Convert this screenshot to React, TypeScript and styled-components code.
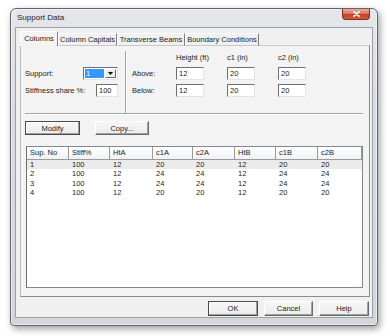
import React from "react";
import styled, { createGlobalStyle } from "styled-components";

const GlobalStyle = createGlobalStyle`
  html, body { margin: 0; padding: 0; background: #ffffff; }
  body {
    font-family: "Liberation Sans", Arial, sans-serif;
    font-size: 7.5px;
    color: #222222;
  }
  * { box-sizing: border-box; }
`;

const Screen = styled.div`
  width: 390px;
  height: 336px;
  padding: 8px 0 0 10px;
  overflow: hidden;
`;

const Window = styled.div`
  width: 368px;
  height: 318px;
  border: 1px solid #5f656b;
  border-radius: 6px 6px 4px 4px;
  background: linear-gradient(180deg, #e4e6e9 0%, #d8dbdf 35%, #d2d5d9 100%);
  box-shadow: 2px 3px 7px rgba(0, 0, 0, 0.38), inset 0 0 0 1px rgba(255, 255, 255, 0.55);
  padding: 0 4px 7px 4px;
  display: flex;
  flex-direction: column;
`;

const TitleBar = styled.div`
  height: 18px;
  display: flex;
  align-items: flex-start;
  justify-content: space-between;
`;

const Title = styled.span`
  font-size: 8px;
  line-height: 18px;
  padding-left: 2px;
  color: #1b1b1b;
`;

const CloseButton = styled.div`
  width: 28px;
  height: 11px;
  margin-right: 3px;
  border: 1px solid #7d2f22;
  border-top: none;
  border-radius: 0 0 4px 4px;
  background: linear-gradient(180deg, #e9ad9d 0%, #d87662 45%, #c4412b 55%, #cb5d41 100%);
  display: flex;
  align-items: center;
  justify-content: center;
`;

const Client = styled.div`
  flex: 1;
  background: #f0f0f0;
  border: 1px solid #9aa1a8;
  display: flex;
  flex-direction: column;
`;

const TabStrip = styled.div`
  display: flex;
  align-items: flex-end;
  height: 15px;
  margin: 3px 0 0 4px;
  position: relative;
  z-index: 1;
`;

const Tab = styled.div<{ $active?: boolean; $w: number }>`
  width: ${(p) => p.$w}px;
  height: ${(p) => (p.$active ? 15 : 13)}px;
  line-height: ${(p) => (p.$active ? 13 : 11)}px;
  text-align: center;
  white-space: nowrap;
  border: 1px solid;
  border-color: #ffffff #7e7e7e ${(p) => (p.$active ? "transparent" : "#c9c9c9")} #ffffff;
  border-bottom-width: ${(p) => (p.$active ? 0 : 1)}px;
  background: ${(p) => (p.$active ? "#f3f3f3" : "#f0f0f0")};
`;

const TabPage = styled.div`
  margin: -1px 2px 0 4px;
  height: 252px;
  border: 1px solid;
  border-color: #c9c9c9 #8a8a8a #8a8a8a #bcbcbc;
  background: #f3f3f3;
  display: flex;
  flex-direction: column;
`;

const TopSection = styled.div`
  height: 67px;
  padding-top: 5px;
  display: flex;
`;

const LeftPanel = styled.div`
  width: 104px;
  padding: 2px 0 0 4px;
  display: grid;
  grid-template-columns: 58px 35px;
  grid-template-rows: 10px 13px 13px;
  row-gap: 4px;
  align-content: start;
`;

const RightPanel = styled.div`
  padding: 2px 0 0 5px;
  display: grid;
  grid-template-columns: 44px 51px 51px 51px;
  grid-template-rows: 10px 13px 13px;
  row-gap: 4px;
  align-content: start;
`;

const Label = styled.span<{ $row: number }>`
  grid-row: ${(p) => p.$row};
  align-self: center;
  white-space: nowrap;
  line-height: 10px;
`;

const ColHead = styled.span`
  grid-row: 1;
  align-self: end;
  line-height: 10px;
  white-space: nowrap;
`;

const VSep = styled.div`
  width: 2px;
  border-left: 1px solid #a3a3a3;
  border-right: 1px solid #ffffff;
`;

const HSep = styled.div`
  margin: 0 6px 0 4px;
  height: 2px;
  border-top: 1px solid #a3a3a3;
  border-bottom: 1px solid #ffffff;
`;

const Field = styled.div<{ $w?: number; $end?: boolean }>`
  width: ${(p) => p.$w ?? 28}px;
  height: 13px;
  justify-self: ${(p) => (p.$end ? "end" : "start")};
  background: #ffffff;
  border: 1px solid;
  border-color: #6f6f6f #e3e3e3 #e3e3e3 #6f6f6f;
  padding-left: 2px;
  line-height: 11px;
`;

const Combo = styled.div`
  width: 35px;
  height: 13px;
  display: flex;
  background: #ffffff;
  border: 1px solid;
  border-color: #6f6f6f #e3e3e3 #e3e3e3 #6f6f6f;
  padding: 1px;
`;

const ComboValue = styled.span`
  flex: 1;
  background: #3399ff;
  color: #ffffff;
  padding-left: 1px;
  line-height: 9px;
`;

const ComboArrow = styled.span`
  width: 11px;
  margin-left: 1px;
  border: 1px solid;
  border-color: #ffffff #696969 #696969 #ffffff;
  background: #ececec;
  display: flex;
  align-items: center;
  justify-content: center;
`;

const ButtonRow = styled.div`
  display: flex;
  gap: 15px;
  margin: 6px 0 0 4px;
`;

const Button = styled.button<{ $w: number; $h?: number; $default?: boolean }>`
  width: ${(p) => p.$w}px;
  height: ${(p) => p.$h ?? 14}px;
  padding: 0;
  font-family: "Liberation Sans", Arial, sans-serif;
  font-size: 7.5px;
  color: #222222;
  background: linear-gradient(180deg, #f6f6f6 0%, #ececec 100%);
  border: 1px solid;
  border-color: ${(p) => (p.$default ? "#4a4a4a" : "#ffffff #6a6a6a #6a6a6a #ffffff")};
  box-shadow: inset -1px -1px 0 #a0a0a0 ${(p) => (p.$default ? ", inset 1px 1px 0 #ffffff" : "")};
`;

const List = styled.div`
  margin: 11px 6px 0 5px;
  height: 142px;
  border: 1px solid #828790;
  border-left-color: #6d6d6d;
  background: #ffffff;
`;

const COLS = "42px 41px 43px 40px 42px 41px 42px 1fr";

const ListHeader = styled.div`
  display: grid;
  grid-template-columns: ${COLS};
  height: 13px;
  background: linear-gradient(180deg, #ffffff 0%, #f1f2f4 100%);
  border-bottom: 1px solid #9a9a9a;
`;

const HeadCell = styled.div`
  padding-left: 3px;
  line-height: 12px;
  border-right: 1px solid #9a9a9a;
  white-space: nowrap;
`;

const ListRow = styled.div<{ $selected?: boolean }>`
  display: grid;
  grid-template-columns: ${COLS};
  height: 9.33px;
  line-height: 9.33px;
  background: ${(p) => (p.$selected ? "#ebebeb" : "transparent")};
`;

const Cell = styled.div`
  padding-left: 3px;
  white-space: nowrap;
`;

const Footer = styled.div`
  height: 20px;
  display: flex;
  justify-content: flex-end;
  gap: 6px;
  padding: 4px 3px 0 0;
`;

const headers = ["Sup. No", "Stiff%", "HtA", "c1A", "c2A", "HtB", "c1B", "c2B"];
const rows = [
  ["1", "100", "12", "20", "20", "12", "20", "20"],
  ["2", "100", "12", "24", "24", "12", "24", "24"],
  ["3", "100", "12", "24", "24", "12", "24", "24"],
  ["4", "100", "12", "20", "20", "12", "20", "20"],
];

const tabs = [
  { label: "Columns", w: 38, active: true },
  { label: "Column Capitals", w: 59 },
  { label: "Transverse Beams", w: 68 },
  { label: "Boundary Conditions", w: 74 },
];

export default function App() {
  return (
    <Screen>
      <GlobalStyle />
      <Window>
        <TitleBar>
          <Title>Support Data</Title>
          <CloseButton>
            <svg width="7" height="6" viewBox="0 0 7 6">
              <path d="M1 0.8 L6 5.2 M6 0.8 L1 5.2" stroke="#ffffff" strokeWidth="1.6" strokeLinecap="round" />
            </svg>
          </CloseButton>
        </TitleBar>
        <Client>
          <TabStrip>
            {tabs.map((t) => (
              <Tab key={t.label} $w={t.w} $active={t.active}>
                {t.label}
              </Tab>
            ))}
          </TabStrip>
          <TabPage>
            <TopSection>
              <LeftPanel>
                <Label $row={2}>Support:</Label>
                <Combo style={{ gridRow: 2 }}>
                  <ComboValue>1</ComboValue>
                  <ComboArrow>
                    <svg width="5" height="3" viewBox="0 0 5 3">
                      <path d="M0 0 H5 L2.5 3 Z" fill="#000" />
                    </svg>
                  </ComboArrow>
                </Combo>
                <Label $row={3}>Stiffness share %:</Label>
                <Field $w={22} $end style={{ gridRow: 3 }}>
                  100
                </Field>
              </LeftPanel>
              <VSep />
              <RightPanel>
                <ColHead style={{ gridColumn: 2 }}>Height (ft)</ColHead>
                <ColHead style={{ gridColumn: 3 }}>c1 (in)</ColHead>
                <ColHead style={{ gridColumn: 4 }}>c2 (in)</ColHead>
                <Label $row={2}>Above:</Label>
                <Field style={{ gridRow: 2 }}>12</Field>
                <Field style={{ gridRow: 2 }}>20</Field>
                <Field style={{ gridRow: 2 }}>20</Field>
                <Label $row={3}>Below:</Label>
                <Field style={{ gridRow: 3 }}>12</Field>
                <Field style={{ gridRow: 3 }}>20</Field>
                <Field style={{ gridRow: 3 }}>20</Field>
              </RightPanel>
            </TopSection>
            <HSep />
            <ButtonRow>
              <Button $w={55} $default>
                Modify
              </Button>
              <Button $w={54}>Copy...</Button>
            </ButtonRow>
            <List>
              <ListHeader>
                {headers.map((h) => (
                  <HeadCell key={h}>{h}</HeadCell>
                ))}
              </ListHeader>
              {rows.map((r, i) => (
                <ListRow key={i} $selected={i === 0}>
                  {r.map((c, j) => (
                    <Cell key={j}>{c}</Cell>
                  ))}
                </ListRow>
              ))}
            </List>
          </TabPage>
          <Footer>
            <Button $w={50} $h={15} $default>
              OK
            </Button>
            <Button $w={49} $h={15}>
              Cancel
            </Button>
            <Button $w={50} $h={15}>
              Help
            </Button>
          </Footer>
        </Client>
      </Window>
    </Screen>
  );
}
